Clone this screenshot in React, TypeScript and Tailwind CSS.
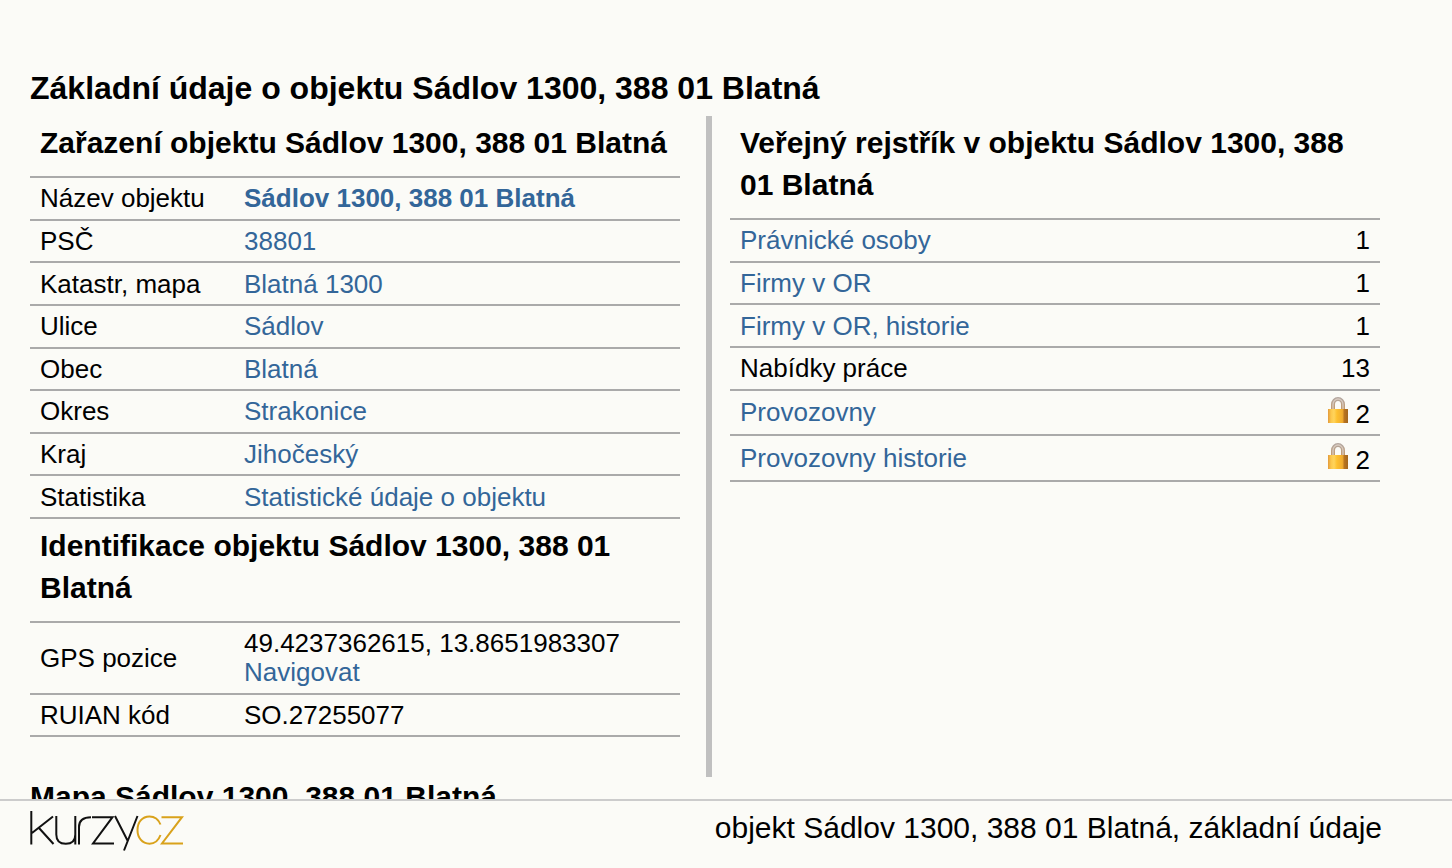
import type { ReactNode } from "react";

type Row = { label: string; value: ReactNode };

const place = "Sádlov 1300, 388 01 Blatná";

function TextLink({ children, bold }: { children: ReactNode; bold?: boolean }) {
  return (
    <a href="#" className={bold ? "text-[#336699] font-bold" : "text-[#336699]"}>
      {children}
    </a>
  );
}

const classification: Row[] = [
  { label: "Název objektu", value: <TextLink bold>{place}</TextLink> },
  { label: "PSČ", value: <TextLink>38801</TextLink> },
  { label: "Katastr, mapa", value: <TextLink>Blatná 1300</TextLink> },
  { label: "Ulice", value: <TextLink>Sádlov</TextLink> },
  { label: "Obec", value: <TextLink>Blatná</TextLink> },
  { label: "Okres", value: <TextLink>Strakonice</TextLink> },
  { label: "Kraj", value: <TextLink>Jihočeský</TextLink> },
  { label: "Statistika", value: <TextLink>Statistické údaje o objektu</TextLink> },
];

const identification: Row[] = [
  {
    label: "GPS pozice",
    value: (
      <>
        49.4237362615, 13.8651983307
        <br />
        <TextLink>Navigovat</TextLink>
      </>
    ),
  },
  { label: "RUIAN kód", value: "SO.27255077" },
];

const register = [
  { label: "Právnické osoby", count: 1, link: true },
  { label: "Firmy v OR", count: 1, link: true },
  { label: "Firmy v OR, historie", count: 1, link: true },
  { label: "Nabídky práce", count: 13 },
  { label: "Provozovny", count: 2, link: true, locked: true },
  { label: "Provozovny historie", count: 2, link: true, locked: true },
];

function Lock() {
  return (
    <svg width="20" height="26" viewBox="0 0 20 26" className="inline-block align-baseline" aria-hidden="true">
      <defs>
        <linearGradient id="lock-body" x1="0" x2="1">
          <stop offset="0" stopColor="#e39a3c" />
          <stop offset="0.15" stopColor="#fcc84c" />
          <stop offset="0.3" stopColor="#ffd45c" />
          <stop offset="0.45" stopColor="#fdc02f" />
          <stop offset="0.72" stopColor="#f0ac30" />
          <stop offset="0.82" stopColor="#b87420" />
          <stop offset="1" stopColor="#a3661f" />
        </linearGradient>
        <linearGradient id="lock-shackle" x1="0" x2="0" y1="0" y2="1">
          <stop offset="0" stopColor="#b3a69e" />
          <stop offset="1" stopColor="#c79a68" />
        </linearGradient>
      </defs>
      <path d="M5 13V7.500a5 5.500 0 0 1 10 0V13" fill="none" stroke="url(#lock-shackle)" strokeWidth="4" />
      <path d="M5 13V7.500a5 5.500 0 0 1 10 0V13" fill="none" stroke="#d9cbc0" strokeWidth="1.3" />
      <path d="M0 12h20v14H0z" fill="url(#lock-body)" />
    </svg>
  );
}

function Logo() {
  return (
    <svg width="154" height="42" viewBox="30 810 154 42" fill="none" strokeWidth="2" role="img" aria-label="kurzycz">
      <g stroke="#111">
        <path d="M31.300 811v33.500M53 816.500L32 833M39 828l14.500 16" />
        <path d="M56.300 816v18.500q0 9.300 9.500 9.300t9.500-9.300V816v28.500" />
        <path d="M79 844.500v-17.500q0-9.800 12-9.800" />
        <path d="M92 817.200h20.500L93 843.500h21" />
        <path d="M115 816l12.500 24.500M137.500 816L124 850.500" />
      </g>
      <g stroke="#d9a21b">
        <path d="M160.500 824.500C158.500 819.500 154.500 816.500 149.500 816.500C142 816.500 137.500 822.500 137.500 830S142 843.700 149.500 843.700C154.500 843.700 158.500 840.500 160.500 835" />
        <path d="M161.500 817.200h20.500L162 843.500h21" />
      </g>
    </svg>
  );
}

function SectionTitle({ children }: { children: ReactNode }) {
  return <h2 className="px-[10px] pt-[6px] pb-3 text-[30px] leading-[42px] font-bold">{children}</h2>;
}

const tableClass = "w-full border-separate border-spacing-0 border-t-2 border-[#aaaaaa] text-[26px] leading-[29px]";
const cellClass = "px-[10px] pt-[6px] pb-[5px] border-b-2 border-[#aaaaaa]";

function DataTable({ rows, className }: { rows: Row[]; className: string }) {
  return (
    <table className={`${tableClass} ${className}`}>
      <tbody>
        {rows.map((row) => (
          <tr key={row.label}>
            <th scope="row" className={`${cellClass} w-[204px] text-left font-normal`}>
              {row.label}
            </th>
            <td className={cellClass}>{row.value}</td>
          </tr>
        ))}
      </tbody>
    </table>
  );
}

export default function App() {
  return (
    <div className="min-h-screen bg-[#fbfbf7] text-black font-['Liberation_Sans',Arial,sans-serif]">
      <main className="pt-[68px] pl-[30px] pr-[72px]">
        <h1 className="mb-2 text-[32px] leading-[40px] font-bold">{`Základní údaje o objektu ${place}`}</h1>

        <div className="flex">
          <section className="flex-1 pb-10">
            <SectionTitle>{`Zařazení objektu ${place}`}</SectionTitle>
            <DataTable rows={classification} className="h-[343px]" />
            <SectionTitle>{`Identifikace objektu ${place}`}</SectionTitle>
            <DataTable rows={identification} className="h-[116px]" />
          </section>

          <div className="ml-[26px] mr-[18px] w-[6px] bg-[#c0c0c0]" />

          <section className="flex-1">
            <SectionTitle>{`Veřejný rejstřík v objektu ${place}`}</SectionTitle>
            <table className={`${tableClass} h-[264px]`}>
              <tbody>
                {register.map((row) => (
                  <tr key={row.label}>
                    <th scope="row" className={`${cellClass} text-left font-normal`}>
                      {row.link ? <TextLink>{row.label}</TextLink> : row.label}
                    </th>
                    <td className={`${cellClass} text-right`}>
                      {row.locked && <Lock />} {row.count}
                    </td>
                  </tr>
                ))}
              </tbody>
            </table>
          </section>
        </div>

        <h2 className="text-[30px] leading-[40px] font-bold">{`Mapa ${place}`}</h2>
      </main>

      <footer className="fixed inset-x-0 bottom-0 flex h-[69px] items-start justify-between border-t-2 border-[#cccccc] bg-[#fbfbf7] pt-[9px] pl-[30px] pr-[70px]">
        <a href="#">
          <Logo />
        </a>
        <p className="text-[30px] leading-[36px]">{`objekt ${place}, základní údaje`}</p>
      </footer>
    </div>
  );
}
